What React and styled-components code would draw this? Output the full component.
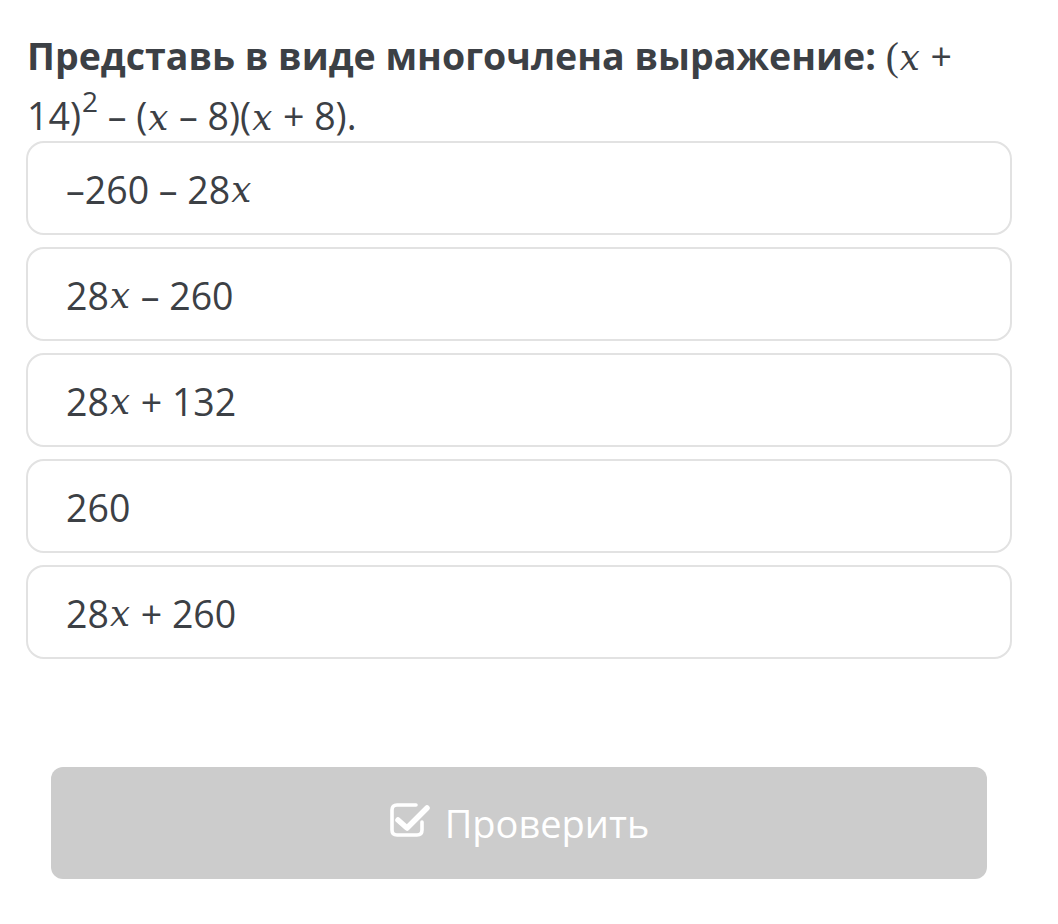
import React from "react";
import styled, { createGlobalStyle } from "styled-components";

const Global = createGlobalStyle`
  html, body { margin: 0; padding: 0; background: #ffffff; }
  body { font-family: "Open Sans", "Noto Sans", sans-serif; color: #3c4045; }
`;

const Page = styled.div`
  width: 986px;
  padding: 27px 0 0 26px;
  display: flex;
  flex-direction: column;
`;

const Question = styled.div`
  font-size: 37.5px;
  line-height: 58px;
  color: #3c4045;
  margin: 0 0 -6px 1px;
`;

const Bold = styled.span`
  font-weight: 700;
`;

const MathX = styled.span`
  font-family: "DejaVu Serif", "Liberation Serif", serif;
  font-style: italic;
  font-size: 0.95em;
  padding: 0 1px;
`;

const Paren = styled.span`
  font-family: "Liberation Serif", serif;
  font-size: 1.05em;
`;

const Sup = styled.sup`
  font-size: 28px;
  line-height: 0;
  vertical-align: 18px;
  padding-left: 1px;
`;

const Options = styled.div`
  display: flex;
  flex-direction: column;
  gap: 12px;
`;

const Option = styled.div`
  box-sizing: border-box;
  height: 94px;
  border: 2px solid #e2e2e2;
  border-radius: 18px;
  display: flex;
  align-items: center;
  padding: 2px 0 0 38px;
  font-size: 37.5px;
  color: #3c4045;
  background: #fff;
  white-space: pre;
`;

const Footer = styled.div`
  padding: 108px 25px 0 25px;
`;

const CheckButton = styled.button`
  box-sizing: border-box;
  width: 100%;
  height: 112px;
  border: none;
  border-radius: 12px;
  background: #cccccc;
  color: #ffffff;
  font-family: "Open Sans", sans-serif;
  font-size: 38px;
  display: flex;
  align-items: center;
  justify-content: center;
  gap: 14px;
  padding: 0;
`;

const Icon = styled.svg`
  width: 42px;
  height: 38px;
  margin-top: -4px;
`;

const X = () => <MathX>x</MathX>;

const options = [
  <>{"–260 – 28"}<X /></>,
  <>{"28"}<X />{" – 260"}</>,
  <>{"28"}<X />{" + 132"}</>,
  <>{"260"}</>,
  <>{"28"}<X />{" + 260"}</>,
];

export default function App() {
  return (
    <>
      <Global />
      <Page>
        <Question>
          <Bold>Представь в виде многочлена выражение:</Bold> <Paren>(</Paren><X /> +
          <br />
          14)<Sup>2</Sup> – (<X /> – 8)(<X /> + 8).
        </Question>
        <Options>
          {options.map((o, i) => (
            <Option key={i}>{o}</Option>
          ))}
        </Options>
        <Footer>
          <CheckButton>
            <Icon viewBox="0 0 42 38" fill="none">
              <path
                d="M27 3 H8 Q3 3 3 8 V28 Q3 33 8 33 H28 Q33 33 33 28 V20"
                stroke="#fff"
                strokeWidth="3.6"
                strokeLinecap="round"
                strokeLinejoin="round"
              />
              <polyline
                points="9,18 18,26 38,6"
                stroke="#fff"
                strokeWidth="5.5"
                strokeLinecap="round"
                strokeLinejoin="round"
              />
            </Icon>
            Проверить
          </CheckButton>
        </Footer>
      </Page>
    </>
  );
}
